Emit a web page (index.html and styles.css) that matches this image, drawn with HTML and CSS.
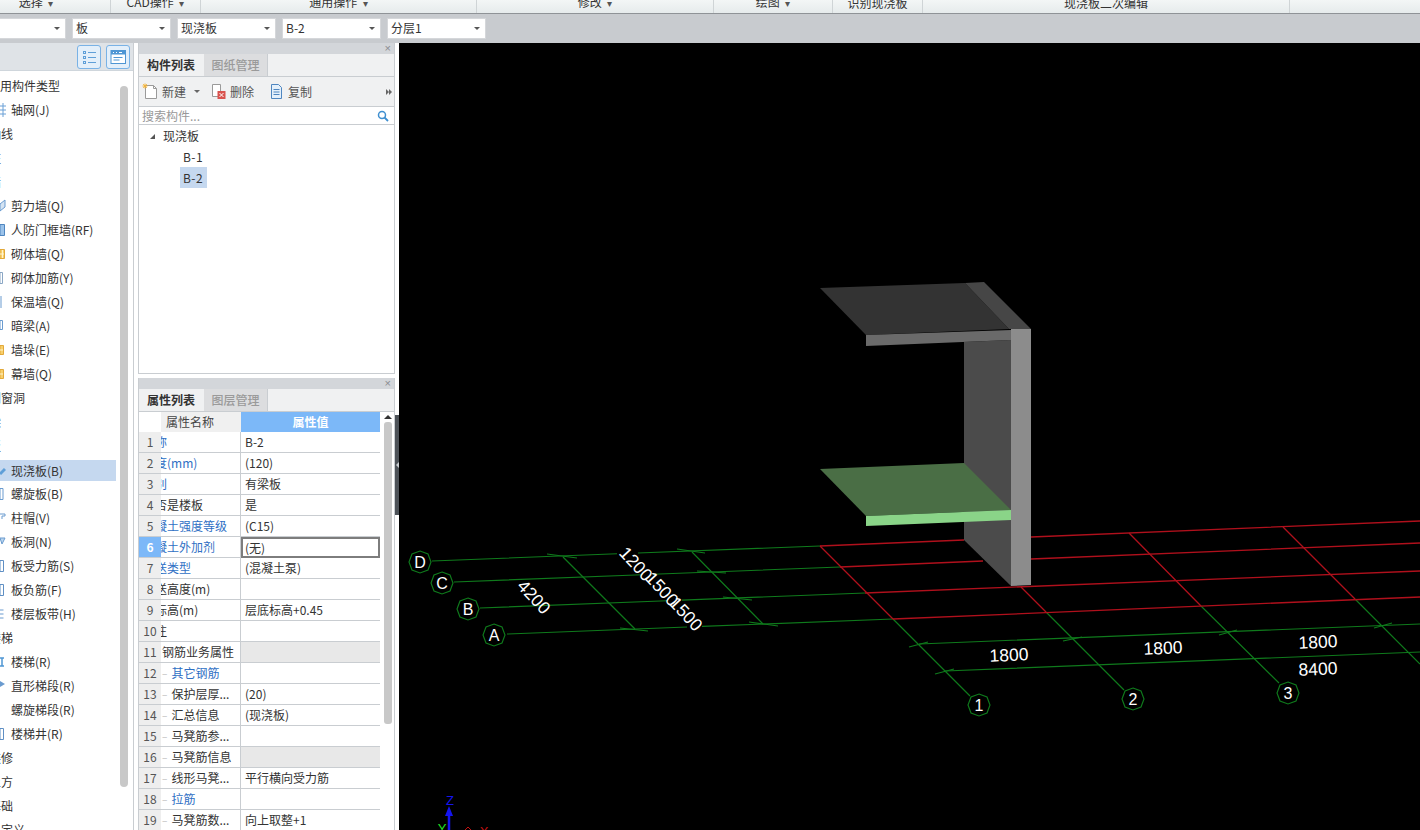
FILE: index.html
```html
<!DOCTYPE html>
<html lang="zh">
<head>
<meta charset="utf-8">
<title>现浇板</title>
<link rel="stylesheet" href="styles.css">
</head>
<body>
<div class="app">
  <header class="ribbon">
    <div class="rib w110 r-first"><span class="rib-t">选择 <i class="caret">▾</i></span></div>
    <div class="rib w90"><span class="rib-t">CAD操作 <i class="caret">▾</i></span></div>
    <div class="rib w276"><span class="rib-t">通用操作 <i class="caret">▾</i></span></div>
    <div class="rib w237"><span class="rib-t">修改 <i class="caret">▾</i></span></div>
    <div class="rib w119"><span class="rib-t">绘图 <i class="caret">▾</i></span></div>
    <div class="rib w90"><span class="rib-t">识别现浇板</span></div>
    <div class="rib w367"><span class="rib-t">现浇板二次编辑</span></div>
    <div class="rib rib-end"></div>
  </header>
  <div class="selbar">
    <div class="sel sel-first"><span></span><i class="arrow"></i></div>
    <div class="sel"><span>板</span><i class="arrow"></i></div>
    <div class="sel"><span>现浇板</span><i class="arrow"></i></div>
    <div class="sel"><span>B-2</span><i class="arrow"></i></div>
    <div class="sel"><span>分层1</span><i class="arrow"></i></div>
  </div>
  <div class="main">
    <aside class="nav">
      <div class="nav-head">
        <button class="navbtn" aria-label="列表">
          <svg width="24" height="24" viewBox="0 0 24 24"><g fill="none" stroke="#5f9fd8"><rect x="6.500" y="6.500" width="2" height="2"/><rect x="6.500" y="11.500" width="2" height="2"/><rect x="6.500" y="16.500" width="2" height="2"/><path d="M11 7.500h8M11 12.500h8M11 17.500h8"/></g></svg>
        </button>
        <button class="navbtn" aria-label="窗口">
          <svg width="24" height="24" viewBox="0 0 24 24"><rect x="5" y="5.500" width="14.500" height="13" fill="#fff" stroke="#4f96d4"/><rect x="5" y="5.500" width="14.500" height="4" fill="#4f96d4"/><path d="M7.500 12.500h9M7.500 15h6" stroke="#4f96d4"/><path d="M7 7.500h1M10 7.500h1M13 7.500h3" stroke="#fff"/></svg>
        </button>
      </div>
      <div class="nav-body">
        <ul class="tree">
          <li class="g g1">常用构件类型</li>
          <li class="i"><svg class="ico" width="6" height="14" viewBox="0 0 6 14"><path d="M0 3h6M0 7h6M0 11h6M3 0v14" stroke="#6aa0d6" fill="none"/></svg>轴网(J)</li>
          <li class="g g2">轴线</li>
          <li class="g g2">柱</li>
          <li class="g g2 bl">墙</li>
          <li class="i"><svg class="ico" width="6" height="14" viewBox="0 0 6 14"><path d="M0 5l5-4v7l-5 4z" fill="#d5e4f3" stroke="#6a9bcf"/></svg>剪力墙(Q)</li>
          <li class="i"><svg class="ico" width="6" height="14" viewBox="0 0 6 14"><path d="M0 1.500h4.500v11H0z" fill="#9cc3ea" stroke="#4f86c0"/></svg>人防门框墙(RF)</li>
          <li class="i"><svg class="ico" width="6" height="14" viewBox="0 0 6 14"><path d="M0 2.500h4.500v9H0z" fill="#f8cf6b" stroke="#e2a93a"/><path d="M0 7h4M2.500 3v8" stroke="#fff4d0"/></svg>砌体墙(Q)</li>
          <li class="i"><svg class="ico" width="6" height="14" viewBox="0 0 6 14"><path d="M0 1.500h2.500v11H0z" fill="#fff" stroke="#8aa6c4"/></svg>砌体加筋(Y)</li>
          <li class="i"><svg class="ico" width="6" height="14" viewBox="0 0 6 14"><path d="M1 1v12" stroke="#6a9bcf"/></svg>保温墙(Q)</li>
          <li class="i"><svg class="ico" width="6" height="14" viewBox="0 0 6 14"><path d="M0 1.500h2.500v9H0z" fill="#fff" stroke="#6a9bcf"/></svg>暗梁(A)</li>
          <li class="i"><svg class="ico" width="6" height="14" viewBox="0 0 6 14"><path d="M0 2.500h3.500v9H0z" fill="#f8cf6b" stroke="#e2a93a"/><path d="M0 7h3" stroke="#fff4d0"/></svg>墙垛(E)</li>
          <li class="i"><svg class="ico" width="6" height="14" viewBox="0 0 6 14"><path d="M0 2.500h3.500v9H0z" fill="#f8cf6b" stroke="#e2a93a"/><path d="M0 7h3" stroke="#fff4d0"/></svg>幕墙(Q)</li>
          <li class="g g2">门窗洞</li>
          <li class="g g2">梁</li>
          <li class="g g2">板</li>
          <li class="i sel-row"><svg class="ico" width="6" height="14" viewBox="0 0 6 14"><path d="M0 10l5-5" stroke="#5f9fd8" stroke-width="3"/></svg>现浇板(B)</li>
          <li class="i"><svg class="ico" width="6" height="14" viewBox="0 0 6 14"><path d="M0 1.500h3v11H0z" fill="#fff" stroke="#6a9bcf"/></svg>螺旋板(B)</li>
          <li class="i"><svg class="ico" width="6" height="14" viewBox="0 0 6 14"><path d="M0 3h5v2H2v3" fill="none" stroke="#6a9bcf"/></svg>柱帽(V)</li>
          <li class="i"><svg class="ico" width="6" height="14" viewBox="0 0 6 14"><path d="M0 3h5l-3 6z" fill="#bcd6ef" stroke="#6a9bcf"/></svg>板洞(N)</li>
          <li class="i"><svg class="ico" width="6" height="14" viewBox="0 0 6 14"><path d="M0 1.500h3.500v11H0z" fill="#fff" stroke="#5f8fc4"/></svg>板受力筋(S)</li>
          <li class="i"><svg class="ico" width="6" height="14" viewBox="0 0 6 14"><path d="M0 1.500h3.500v11H0z" fill="#fff" stroke="#5f8fc4"/></svg>板负筋(F)</li>
          <li class="i"><svg class="ico" width="6" height="14" viewBox="0 0 6 14"><path d="M0 3h3.500M0 7h3.500M0 11h3.500" stroke="#6a9bcf"/></svg>楼层板带(H)</li>
          <li class="g g2">楼梯</li>
          <li class="i"><svg class="ico" width="6" height="14" viewBox="0 0 6 14"><path d="M0 3h4M0 11h4M2 3v8" stroke="#4f96d4" stroke-width="1.500" fill="none"/></svg>楼梯(R)</li>
          <li class="i"><svg class="ico" width="6" height="14" viewBox="0 0 6 14"><path d="M0 2l5 3-5 3z" fill="#6a9bcf"/></svg>直形梯段(R)</li>
          <li class="i"><span class="ico"></span>螺旋梯段(R)</li>
          <li class="i"><svg class="ico" width="6" height="14" viewBox="0 0 6 14"><path d="M0 1.500h3.500v11H0z" fill="#fff" stroke="#5f8fc4"/></svg>楼梯井(R)</li>
          <li class="g g2">装修</li>
          <li class="g g2">土方</li>
          <li class="g g2">基础</li>
          <li class="g g2">自定义</li>
        </ul>
        <div class="nav-scroll"><div class="nav-thumb"></div></div>
      </div>
    </aside>
    <div class="side">
      <section class="panel panel-a">
        <div class="ptitle"><span class="px">×</span></div>
        <div class="tabs"><span class="tab on">构件列表</span><span class="tab">图纸管理</span></div>
        <div class="tools">
          <span class="tool t-new"><svg width="17" height="17" viewBox="0 0 17 17"><path d="M3.500 2.500h8l3 3v10h-11z" fill="#fff" stroke="#9a9a9a"/><path d="M11.500 2.500v3h3" fill="none" stroke="#9a9a9a"/><path d="M3 0.500v5M0.500 3h5M1.200 1.200l3.600 3.600M4.800 1.200L1.200 4.800" stroke="#f5b53a"/></svg>新建<i class="mini"></i></span>
          <span class="tool t-del"><svg width="17" height="17" viewBox="0 0 17 17"><path d="M2.500 1.500h8v12h-8z" fill="#fff" stroke="#9a9a9a"/><rect x="7.500" y="8" width="8" height="8" fill="#d9534f"/><path d="M9.500 10l4 4M13.500 10l-4 4" stroke="#fff"/></svg>删除</span>
          <span class="tool t-copy"><svg width="17" height="17" viewBox="0 0 17 17"><path d="M3.500 1.500h7l3 3v11h-10z" fill="#e4f0fb" stroke="#4f86c0"/><path d="M5.500 6.500h6M5.500 9h6M5.500 11.500h6" stroke="#4f86c0"/></svg>复制</span>
          <span class="more"><i class="mt"></i><i class="mt"></i></span>
        </div>
        <div class="search"><span>搜索构件...</span>
          <svg width="12" height="12" viewBox="0 0 12 12"><circle cx="5" cy="5" r="3.500" fill="none" stroke="#3f8fd0" stroke-width="1.500"/><path d="M7.500 7.500l3.500 3.500" stroke="#3f8fd0" stroke-width="1.800"/></svg>
        </div>
        <div class="ctree">
          <div class="cnode"><i class="tri"></i>现浇板</div>
          <div class="cleaf">B-1</div>
          <div class="cleaf cur">B-2</div>
        </div>
      </section>
      <section class="panel panel-b">
        <div class="ptitle"><span class="px">×</span></div>
        <div class="tabs"><span class="tab on">属性列表</span><span class="tab">图层管理</span></div>
        <div class="grid-wrap">
          <div class="grid">
            <div class="row hd"><div class="c0"></div><div class="c1">属性名称</div><div class="c2">属性值</div></div>
            <div class="row"><div class="c0">1</div><div class="c1 link clip">名称</div><div class="c2">B-2</div></div>
            <div class="row"><div class="c0">2</div><div class="c1 link clip">厚度(mm)</div><div class="c2">(120)</div></div>
            <div class="row"><div class="c0">3</div><div class="c1 link clip">类别</div><div class="c2">有梁板</div></div>
            <div class="row"><div class="c0">4</div><div class="c1 clip">是否是楼板</div><div class="c2">是</div></div>
            <div class="row"><div class="c0">5</div><div class="c1 link clip">混凝土强度等级</div><div class="c2">(C15)</div></div>
            <div class="row"><div class="c0 cur0">6</div><div class="c1 link clip">混凝土外加剂</div><div class="c2 edit">(无)</div></div>
            <div class="row"><div class="c0">7</div><div class="c1 link clip">泵送类型</div><div class="c2">(混凝土泵)</div></div>
            <div class="row"><div class="c0">8</div><div class="c1 clip">泵送高度(m)</div><div class="c2"></div></div>
            <div class="row"><div class="c0">9</div><div class="c1 clip">顶标高(m)</div><div class="c2">层底标高+0.45</div></div>
            <div class="row"><div class="c0">10</div><div class="c1 clip">备注</div><div class="c2"></div></div>
            <div class="row grp"><div class="c0">11</div><div class="c1 ind0">钢筋业务属性</div><div class="c2"></div></div>
            <div class="row"><div class="c0">12</div><div class="c1 ind link"><b>其它钢筋</b></div><div class="c2"></div></div>
            <div class="row"><div class="c0">13</div><div class="c1 ind"><b>保护层厚...</b></div><div class="c2">(20)</div></div>
            <div class="row"><div class="c0">14</div><div class="c1 ind"><b>汇总信息</b></div><div class="c2">(现浇板)</div></div>
            <div class="row"><div class="c0">15</div><div class="c1 ind"><b>马凳筋参...</b></div><div class="c2"></div></div>
            <div class="row grp"><div class="c0">16</div><div class="c1 ind"><b>马凳筋信息</b></div><div class="c2"></div></div>
            <div class="row"><div class="c0">17</div><div class="c1 ind"><b>线形马凳...</b></div><div class="c2">平行横向受力筋</div></div>
            <div class="row"><div class="c0">18</div><div class="c1 ind link"><b>拉筋</b></div><div class="c2"></div></div>
            <div class="row"><div class="c0">19</div><div class="c1 ind"><b>马凳筋数...</b></div><div class="c2">向上取整+1</div></div>
          </div>
          <div class="vscroll"><i class="up"></i><div class="vthumb"></div></div>
        </div>
      </section>
    </div>
    <div class="splitter"><div class="grip"><i class="grip-arrow"></i></div></div>
    <div class="view">
      <svg class="scene" width="1021" height="787" viewBox="399 43 1021 787">
        <g fill="none" stroke="#0f7a1c" stroke-width="1.150">
          <path d="M432 561L617 553.800M638 553L820 546M454 582L642 574.700M653 574.300L840 567M480 608L667 600.700M682 600.100L865 593M507 634L687 627M702 626.400L893 619"/>
          <path d="M563 557L635 629M692 552L763 624"/>
          <path d="M547 554L577 558M677 549L705 553M697 571L726 573M723 597L752 600M749 622L778 626M620 628L648 631"/>
          <path d="M893 619L970 696M1046 612L1124 690M1201 606L1279 683M1355 599L1420 664"/>
          <path d="M919 644L1420 624M945 671L1420 652"/>
          <path d="M909 647L928 642M1063 641L1082 637M1219 635L1237 630M1374 628L1392 623M935 674L954 669"/>
          <polygon points="420,551 428,554 431,562 428,570 420,573 412,570 409,562 412,554"/>
          <polygon points="442,572 450,575 453,583 450,591 442,594 434,591 431,583 434,575"/>
          <polygon points="468,598 476,601 479,609 476,617 468,620 460,617 457,609 460,601"/>
          <polygon points="494,624 502,627 505,635 502,643 494,646 486,643 483,635 486,627"/>
          <polygon points="979,694 987,697 990,705 987,713 979,716 971,713 968,705 971,697"/>
          <polygon points="1133,688 1141,691 1144,699 1141,707 1133,710 1125,707 1122,699 1125,691"/>
          <polygon points="1288,682 1296,685 1299,693 1296,701 1288,704 1280,701 1277,693 1280,685"/>
        </g>
        <g fill="none" stroke="#b0101c" stroke-width="1.300">
          <path d="M820 546L964 540M1031 537L1420 521"/>
          <path d="M840 567L983 561M1031 559L1420 543"/>
          <path d="M865 593L1420 571"/>
          <path d="M893 619L1420 597"/>
          <path d="M820 546L893 619M1021 587L1046 612M1129 533L1201 606M1283 527L1355 599"/>
        </g>
        <polygon points="964,342 1011,340 1011,586 964,540" fill="#4b4b4b"/>
        <polygon points="1011,329 1031,329 1031,585 1011,586" fill="#8c8c8c"/>
        <polygon points="820,288 965,283 1009,329 866,335" fill="#333333"/>
        <polygon points="965,283 984,282 1031,329 1009,329" fill="#464646"/>
        <polygon points="866,335 1011,330 1011,340 866,346" fill="#6a6a6a"/>
        <polygon points="820,469 964,463 1011,510 866,516" fill="#4a6e45"/>
        <polygon points="866,516 1011,510 1011,520 866,526" fill="#8ad488"/>
        <g class="lbl">
          <text x="420" y="568">D</text>
          <text x="442" y="589">C</text>
          <text x="468" y="615">B</text>
          <text x="494" y="641">A</text>
          <text x="979" y="711">1</text>
          <text x="1133" y="705">2</text>
          <text x="1288" y="699">3</text>
        </g>
        <g class="dim">
          <text transform="translate(534 597) rotate(47)" y="6">4200</text>
          <text transform="translate(636 564) rotate(47)" y="6">1200</text>
          <text transform="translate(662 589) rotate(47)" y="6">1500</text>
          <text transform="translate(686 614) rotate(47)" y="6">1500</text>
          <text transform="translate(1009 655) rotate(-2.500)" y="6">1800</text>
          <text transform="translate(1163 648) rotate(-2.500)" y="6">1800</text>
          <text transform="translate(1318 642) rotate(-2.500)" y="6">1800</text>
          <text transform="translate(1318 669) rotate(-2.500)" y="6">8400</text>
        </g>
        <g class="axis">
          <path d="M449 830V812" stroke="#1414f0" stroke-width="2.500"/>
          <path d="M449 806l-4 10h8z" fill="#1414f0"/>
          <text class="az" x="450" y="805">Z</text>
          <text class="ay" x="442" y="833">Y</text>
          <text class="ax" x="484" y="836">X</text>
          <path d="M465 830l3-3 3 3" stroke="#c01010" fill="none"/>
        </g>
      </svg>
    </div>
  </div>
</div>
</body>
</html>
```
FILE: styles.css
```css
* { box-sizing: border-box; }
html, body { margin: 0; padding: 0; height: 100%; overflow: hidden; }
body { font: 12px/1 "Noto Sans CJK SC", "Liberation Sans", sans-serif; color: #222; background: #fff; }
ul { list-style: none; margin: 0; padding: 0; }
i { font-style: normal; }
.app { width: 1420px; height: 830px; display: flex; flex-direction: column; overflow: hidden; }

.ribbon { height: 14px; flex: none; display: flex; background: linear-gradient(#f3f6f6, #e6ebec); border-bottom: 1px solid #8f9397; color: #333; overflow: hidden; }
.rib { height: 13px; border-right: 1px solid #cfd4d6; display: flex; justify-content: center; align-items: flex-end; overflow: hidden; }
.rib-t { line-height: 14px; margin-bottom: 3px; white-space: nowrap; }
.caret { font-size: 10px; color: #555; margin-left: 3px; }
.r-first { padding-right: 38px; }
.w110 { width: 111px; } .w90 { width: 90px; } .w276 { width: 276px; } .w237 { width: 237px; } .w119 { width: 119px; } .w367 { width: 367px; }
.rib-end { flex: 1; border: 0; }

.selbar { height: 29px; flex: none; display: flex; gap: 6px; padding: 4px 0 4px 0; background: #c8cbcf; }
.sel { width: 99px; height: 21px; background: #fff; border: 1px solid #d5d7da; display: flex; align-items: center; justify-content: space-between; padding: 0 5px 1px 3px; color: #333; }
.sel-first { width: 66px; border-left: 0; }
.arrow { width: 0; height: 0; border: 3px solid transparent; border-top: 3px solid #555; border-bottom: 0; }

.main { flex: 1; min-height: 0; display: flex; background: #fff; }

.nav { width: 134px; flex: none; display: flex; flex-direction: column; border-right: 1px solid #c9cdd1; }
.nav-head { height: 28px; flex: none; display: flex; justify-content: flex-end; gap: 5px; padding: 2px 3px 0 0; background: #dfe3e7; border-bottom: 1px solid #cfd6dc; }
.navbtn { width: 24px; height: 24px; padding: 0; border: 1px solid #79b2e6; border-radius: 3px; background: #e3effa; display: block; }
.navbtn svg { display: block; margin: -1px; }
.nav-body { flex: 1; min-height: 0; display: flex; overflow: hidden; }
.tree { width: 116px; flex: none; padding-top: 3px; }
.tree li { height: 24px; display: flex; align-items: center; white-space: nowrap; color: #333; font-size: 12px; }
.tree li.g1 { margin-left: -12px; }
.tree li.g2 { transform: translateX(-11px); }
.tree li.bl { color: #4a78b0; }
.ico { width: 6px; height: 14px; flex: none; margin-right: 5px; display: block; }
.tree li.sel-row { background: #c5d8ef; height: 21px; margin: 2px 0 1px; }
.nav-scroll { width: 17px; flex: none; padding: 15px 5px 0 4px; }
.nav-thumb { height: 701px; background: #c8c8c8; border-radius: 4px; }

.side { width: 257px; flex: none; margin-left: 4px; display: flex; flex-direction: column; gap: 4px; }
.panel { border: 1px solid #c9cdd1; border-top: 0; display: flex; flex-direction: column; background: #fff; overflow: hidden; }
.panel-a { height: 331px; flex: none; }
.panel-b { flex: 1; min-height: 0; border-bottom: 0; }
.ptitle { height: 11px; flex: none; background: #d3d6da; display: flex; justify-content: flex-end; align-items: center; padding-right: 4px; margin: 0 -1px; }
.px { font: 11px/11px "Liberation Sans", sans-serif; color: #8a8d90; }
.tabs { height: 23px; flex: none; display: flex; background: #f0f1f2; border-bottom: 1px solid #c9cdd1; }
.tab { width: 64px; display: flex; align-items: center; justify-content: center; color: #9a9a9a; background: #dcdddf; border-right: 1px solid #c9cdd1; font-weight: 500; }
.tab.on { width: 65px; padding-right: 1px; color: #333; background: #f0f1f2; border-right: 0; font-weight: 700; }
.tools { height: 30px; flex: none; display: flex; align-items: center; background: #f0f1f2; border-bottom: 1px solid #c9cdd1; color: #555; }
.tool { display: flex; align-items: center; gap: 3px; white-space: nowrap; }
.t-new { margin-left: 3px; width: 68px; }
.t-del { width: 58px; }
.t-copy { width: 60px; }
.mini { width: 0; height: 0; margin-left: 5px; border: 3px solid transparent; border-top: 3px solid #666; border-bottom: 0; }
.more { margin-left: auto; margin-right: 2px; display: flex; }
.mt { width: 0; height: 0; border: 3px solid transparent; border-left: 3.500px solid #666; border-right: 0; }
.search { height: 18px; flex: none; display: flex; align-items: center; justify-content: space-between; padding: 0 5px 0 3px; border-bottom: 1px solid #c9cdd1; color: #999; }
.ctree { flex: 1; color: #333; }
.cnode { height: 21px; display: flex; align-items: center; padding-left: 24px; position: relative; }
.tri { position: absolute; left: 11px; top: 9px; width: 0; height: 0; border-left: 5px solid transparent; border-bottom: 5px solid #555; }
.cleaf { height: 21px; width: 27px; margin-left: 41px; padding-right: 1px; display: flex; align-items: center; justify-content: center; letter-spacing: 0.400px; }
.cleaf.cur { background: #c5d8ef; }

.grid-wrap { flex: 1; min-height: 0; display: flex; overflow: hidden; }
.grid { width: 241px; flex: none; }
.row { height: 21px; display: flex; border-bottom: 1px solid #c9cdd1; }
.row.hd { height: 20px; border-bottom: 0; }
.c0 { width: 22px; flex: none; background: #eeeeee; display: flex; align-items: center; justify-content: center; color: #555; }
.hd .c0 { background: #fff; }
.c1 { width: 80px; flex: none; display: flex; align-items: center; white-space: nowrap; overflow: hidden; border-right: 1px solid #c9cdd1; color: #333; }
.hd .c1 { background: #f0f0f0; padding-left: 5px; border-right: 0; color: #444; }
.c1.clip { display: block; line-height: 20px; text-indent: -18px; }
.c1.link { color: #2f6fc4; }
.ind::before { content: "–"; color: #bbb; font-size: 10px; margin: 0 4px 0 1px; }
.ind b { font-weight: 400; }
.ind0 { padding-left: 1px; }
.c2 { flex: 1; display: flex; align-items: center; padding-left: 4px; white-space: nowrap; color: #333; }
.hd .c2 { background: #7cb8f8; color: #fff; padding-left: 0; justify-content: center; font-weight: 700; }
.grp .c2 { background: #e8e8e8; }
.cur0 { background: #7cb8f8; color: #fff; font-weight: 700; }
.edit { border: 2px solid #7d7d7d; padding-left: 2px; margin-bottom: -1px; background: #fff; }
.vscroll { flex: 1; display: flex; flex-direction: column; align-items: center; padding: 3px 0 0 1px; }
.up { width: 0; height: 0; border: 4px solid transparent; border-bottom: 4px solid #333; border-top: 0; }
.vthumb { width: 8px; height: 302px; margin-top: 3px; background: #c8c8c8; border-radius: 3px; }

.splitter { width: 4px; flex: none; padding-top: 372px; background: #fff; }
.grip { height: 100px; background: #4d5258; display: flex; align-items: center; justify-content: center; }
.grip-arrow { width: 0; height: 0; border: 3px solid transparent; border-right: 3px solid #c9cdd1; border-left: 0; }

.view { flex: 1; min-width: 0; background: #000; overflow: hidden; }
.scene { display: block; }
.lbl text { font: 16px "Liberation Sans", sans-serif; fill: #fff; text-anchor: middle; }
.dim text { font: 17.500px "Liberation Sans", sans-serif; fill: #fff; text-anchor: middle; }
.axis text { font: 13px "Liberation Sans", sans-serif; text-anchor: middle; }
.az { fill: #1414f0; }
.ay { fill: #22e022; }
.ax { fill: #c01010; }
```
